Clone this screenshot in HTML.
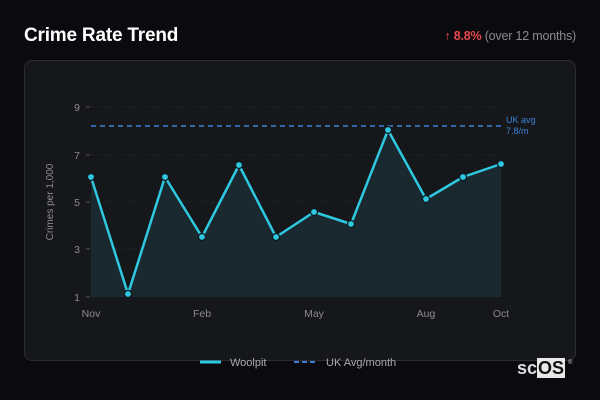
<!DOCTYPE html>
<html><head><style>
body{margin:0;width:600px;height:400px;background:#0b0b0f;font-family:"Liberation Sans","DejaVu Sans",sans-serif;position:relative;overflow:hidden}
.t{position:absolute;left:24px;top:25px;color:#fff;font-weight:bold;font-size:19px;font-family:"Liberation Sans",sans-serif;letter-spacing:-0.2px}
.r{position:absolute;right:24px;top:29px;font-size:12.5px;color:#8a8b90;font-family:"Liberation Sans",sans-serif;letter-spacing:-0.2px}
.r b{color:#e5484d}
.card{position:absolute;left:24px;top:60px;width:550px;height:299px;background:#16171b;border:1px solid #2c2d32;border-radius:8px}
svg{position:absolute;left:0;top:0}
.logo{position:absolute;left:517px;top:358px;font:bold 18px "Liberation Sans",sans-serif;color:#ddd}
.logo span{background:#e8e8e8;color:#111;padding:0 1px}
</style></head><body>
<div class="t">Crime Rate Trend</div>
<div class="r"><b>↑ 8.8%</b> (over 12 months)</div>
<div class="card"></div>
<svg width="600" height="400" font-family="Liberation Sans, sans-serif">
<g stroke="#222328" stroke-dasharray="3,3" stroke-width="1">
<line x1="91" y1="107" x2="501" y2="107"/><line x1="91" y1="155" x2="501" y2="155"/><line x1="91" y1="202" x2="501" y2="202"/><line x1="91" y1="249" x2="501" y2="249"/>
</g>
<g stroke="#555" stroke-width="1"><line x1="86" y1="107" x2="90" y2="107"/><line x1="86" y1="155" x2="90" y2="155"/><line x1="86" y1="202" x2="90" y2="202"/><line x1="86" y1="249" x2="90" y2="249"/><line x1="86" y1="297" x2="90" y2="297"/></g>
<g fill="#8a8b90" font-size="10.5" text-anchor="end"><text x="80" y="111">9</text><text x="80" y="159">7</text><text x="80" y="206">5</text><text x="80" y="253">3</text><text x="80" y="301">1</text></g>
<text transform="translate(53,202) rotate(-90)" fill="#8a8b90" font-size="10" text-anchor="middle">Crimes per 1,000</text>
<g fill="#8a8b90" font-size="10.5" text-anchor="middle"><text x="91" y="317">Nov</text><text x="202" y="317">Feb</text><text x="314" y="317">May</text><text x="426" y="317">Aug</text><text x="501" y="317">Oct</text></g>
<polygon fill="#19292f" points="91,297 91,177 128,294 165,177 202,237 239,165 276,237 314,212 351,224 388,130 426,199 463,177 501,164 501,297"/>
<line x1="91" y1="126" x2="501" y2="126" stroke="#3b82d6" stroke-width="1.5" stroke-dasharray="5,4"/>
<text x="506" y="123" fill="#3b82d6" font-size="9">UK avg</text><text x="506" y="134" fill="#3b82d6" font-size="9">7.8/m</text>
<polyline fill="none" stroke="#2ec8e0" stroke-width="2.5" stroke-linejoin="round" points="91,177 128,294 165,177 202,237 239,165 276,237 314,212 351,224 388,130 426,199 463,177 501,164"/>
<g fill="#2ec8e0" stroke="#0e1a1f" stroke-width="1.2">
<circle cx="91" cy="177" r="3.5"/><circle cx="128" cy="294" r="3.5"/><circle cx="165" cy="177" r="3.5"/><circle cx="202" cy="237" r="3.5"/><circle cx="239" cy="165" r="3.5"/><circle cx="276" cy="237" r="3.5"/><circle cx="314" cy="212" r="3.5"/><circle cx="351" cy="224" r="3.5"/><circle cx="388" cy="130" r="3.5"/><circle cx="426" cy="199" r="3.5"/><circle cx="463" cy="177" r="3.5"/><circle cx="501" cy="164" r="3.5"/>
</g>
<line x1="200" y1="362" x2="221" y2="362" stroke="#2ec8e0" stroke-width="3"/>
<text x="230" y="366" fill="#a8a9ae" font-size="11">Woolpit</text>
<line x1="294" y1="362" x2="316" y2="362" stroke="#3b82d6" stroke-width="2" stroke-dasharray="5,3"/>
<text x="326" y="366" fill="#a8a9ae" font-size="11">UK Avg/month</text>
<text x="568" y="364" fill="#ccc" font-size="6">®</text>
</svg>
<div class="logo">sc<span>OS</span></div>
</body></html>
